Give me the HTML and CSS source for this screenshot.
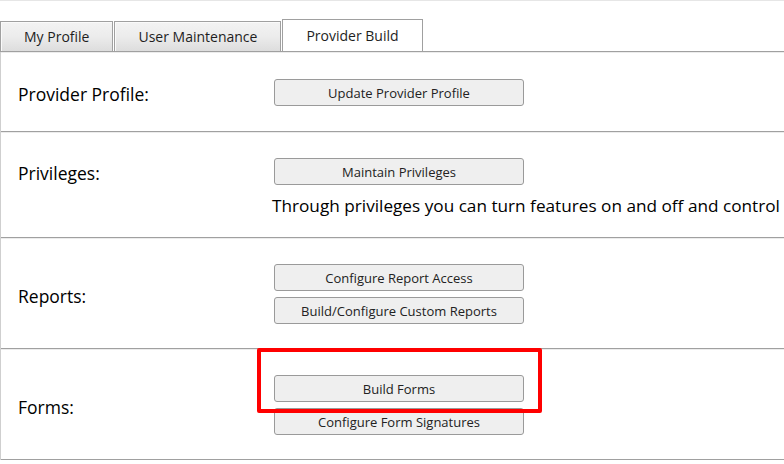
FILE: index.html
```html
<!DOCTYPE html>
<html lang="en">

<head>
    <meta charset="UTF-8">
    <meta name="viewport" content="width=device-width, initial-scale=1.0">
    <title>Provider Build</title>
    <link rel="stylesheet" href="styles.css">
</head>

<body>
    <div class="tabs">
        <div class="tab">My Profile</div>
        <div class="tab">User Maintenance</div>
        <div class="tab active">Provider Build</div>
    </div>

    <div class="panel">
        <div class="section">
            <div class="label">Provider Profile:</div>
            <div class="actions">
                <button type="button">Update Provider Profile</button>
            </div>
        </div>

        <div class="section with-note">
            <div class="label">Privileges:</div>
            <div class="actions">
                <button type="button">Maintain Privileges</button>
                <p class="note">Through privileges you can turn features on and off and control</p>
            </div>
        </div>

        <div class="section">
            <div class="label">Reports:</div>
            <div class="actions">
                <button type="button">Configure Report Access</button>
                <button type="button">Build/Configure Custom Reports</button>
            </div>
        </div>

        <div class="section">
            <div class="label">Forms:</div>
            <div class="actions highlighted">
                <button type="button">Build Forms</button>
                <button type="button">Configure Form Signatures</button>
                <div class="callout"></div>
            </div>
        </div>
    </div>
</body>

</html>
```

FILE: styles.css
```css
body {
    font-family: "Open Sans", "Noto Sans", sans-serif;
    margin: 0;
    padding: 0;
    background-color: #fff;
    color: #000;
    overflow: hidden;
    border-top: 1px solid #e6e6e6;
}

.tabs {
    display: flex;
    align-items: flex-end;
    height: 50px;
    border-bottom: 1px solid #a0a0a0;
}

.tab {
    height: 29px;
    line-height: 29px;
    padding: 0 23px;
    margin-right: 1px;
    font-size: 14px;
    color: #1e1e1e;
    text-align: center;
    border: 1px solid #a0a0a0;
    border-bottom: none;
    background: linear-gradient(#f3f3f3, #ececec 50%, #dddddd);
    box-shadow: inset 1px 1px 0 #fafafa;
}

.tab.active {
    height: 31px;
    line-height: 31px;
    background: #fff;
    box-shadow: none;
}

.panel {
    border-left: 1px solid #cfcfcf;
}

.section {
    display: grid;
    grid-template-columns: 273px 1fr;
    align-items: center;
    border-top: 1px solid #ececec;
    border-bottom: 1px solid #a0a0a0;
    padding: 25px 0 24px;
}

.section:first-child {
    padding: 26px 0 25px;
}

.label {
    padding: 3px 0 0 17px;
    font-size: 17.5px;
}

.with-note .label {
    align-self: start;
}

.actions {
    display: flex;
    flex-direction: column;
    align-items: flex-start;
    gap: 6px;
    min-width: 0;
}

.actions.highlighted {
    position: relative;
}

button {
    width: 250px;
    height: 27px;
    padding: 0;
    font-family: "Open Sans", "Noto Sans", sans-serif;
    font-size: 13px;
    color: #222;
    background-color: #efefef;
    border: 1px solid #9a9a9a;
    border-radius: 3px;
}

.note {
    margin: 4px 0 -4px -2px;
    font-size: 17.2px;
    line-height: 22px;
    white-space: nowrap;
}

.callout {
    position: absolute;
    left: -17px;
    top: -27px;
    width: 277px;
    height: 57px;
    border: 4px solid #f00;
    border-radius: 2px;
}
```
